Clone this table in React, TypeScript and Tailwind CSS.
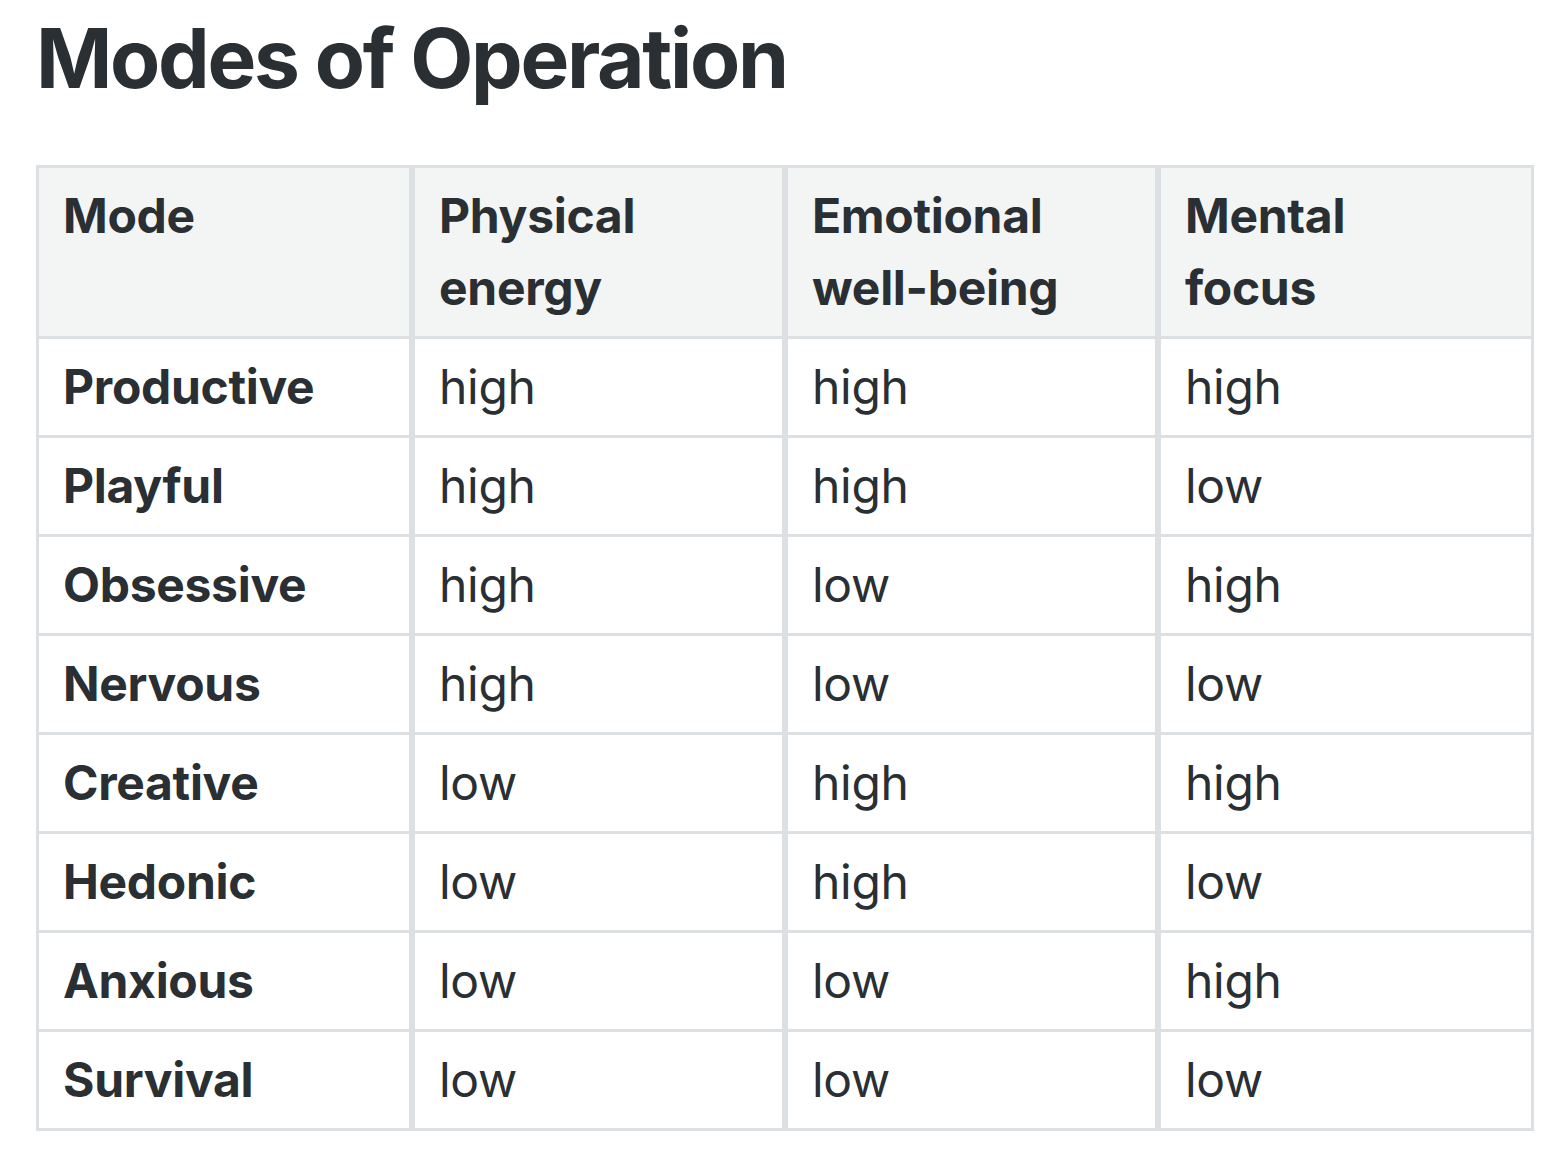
import React from "react";

const rows = [
  ["Productive", "high", "high", "high"],
  ["Playful", "high", "high", "low"],
  ["Obsessive", "high", "low", "high"],
  ["Nervous", "high", "low", "low"],
  ["Creative", "low", "high", "high"],
  ["Hedonic", "low", "high", "low"],
  ["Anxious", "low", "low", "high"],
  ["Survival", "low", "low", "low"],
];

const headers = [
  ["Mode"],
  ["Physical", "energy"],
  ["Emotional", "well-being"],
  ["Mental", "focus"],
];

const cellBorder = (col: number, lastRow: boolean) => {
  let cls = "border-[#dde0e3]";
  if (!lastRow) cls += " border-b-[3px]";
  if (col > 0) cls += " border-l-[3px]";
  if (col < 3) cls += " border-r-[3px]";
  return cls;
};

const App = () => {
  return (
    <div
      className="min-h-screen bg-white px-[36px] pt-[10px] text-[#292f33]"
      style={{ fontFamily: "Inter, 'Noto Sans', sans-serif" }}
    >
      <h1 className="text-[82px] font-bold leading-[98px] tracking-[-2.3px] mb-[57px]">
        Modes of Operation
      </h1>

      <table className="w-[1498px] table-fixed border-separate border-spacing-0 border-[3px] border-[#dde0e3] text-[48px] leading-[72px] tracking-[-0.3px]">
        <thead>
          <tr className="bg-[#f3f4f4]">
            {headers.map((h, i) => (
              <th
                key={i}
                className={`text-left align-top font-bold pl-[24px] pr-[24px] py-[12px] ${cellBorder(i, false)}`}
              >
                {h.map((line, j) => (
                  <div key={j}>{line}</div>
                ))}
              </th>
            ))}
          </tr>
        </thead>
        <tbody>
          {rows.map((row, r) => (
            <tr key={r}>
              {row.map((val, c) => (
                <td
                  key={c}
                  className={`pl-[24px] pr-[24px] py-[12px] ${c === 0 ? "font-bold" : "font-normal"} ${cellBorder(c, r === rows.length - 1)}`}
                >
                  {val}
                </td>
              ))}
            </tr>
          ))}
        </tbody>
      </table>
    </div>
  );
};

export default App;
